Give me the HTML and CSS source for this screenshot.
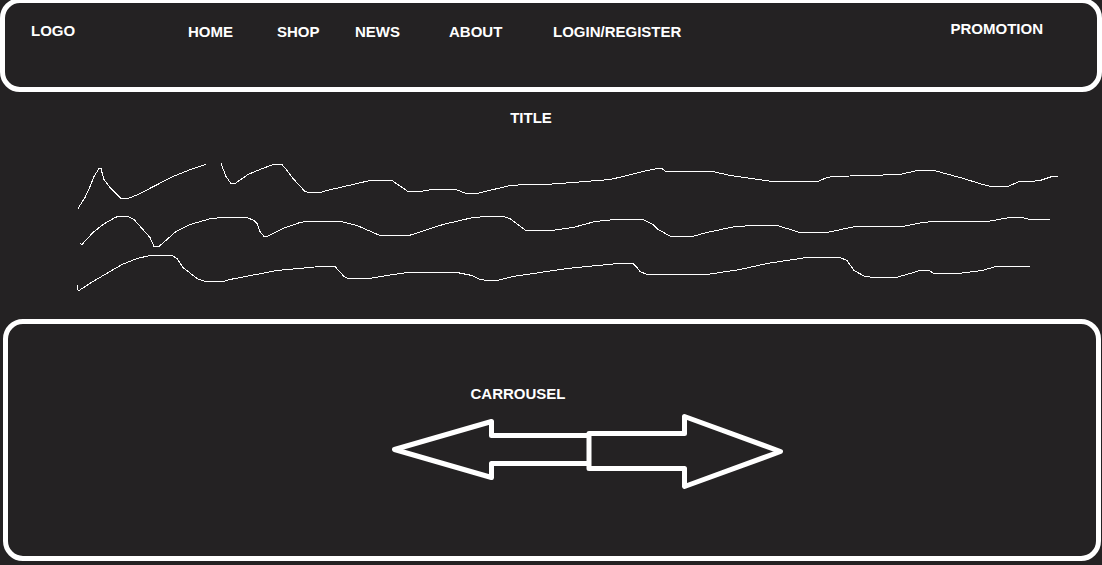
FILE: index.html
```html
<!DOCTYPE html>
<html lang="en">
<head>
<meta charset="utf-8">
<meta name="viewport" content="width=device-width, initial-scale=1">
<title>Wireframe</title>
<link rel="stylesheet" href="styles.css">
</head>
<body>
<header class="header">
  <a class="logo" href="#">LOGO</a>
  <nav class="nav">
    <a href="#">HOME</a>
    <a href="#">SHOP</a>
    <a href="#">NEWS</a>
    <a href="#">ABOUT</a>
    <a href="#">LOGIN/REGISTER</a>
  </nav>
  <a class="promotion" href="#">PROMOTION</a>
</header>
<main>
  <section>
    <h1 class="title">TITLE</h1>
    <svg class="scribble" viewBox="0 0 1102 150" aria-hidden="true">
      <g transform="translate(0 .5)">
        <polyline points="78,58 85,47 90,36 94,26 99,18 101,18 102,22 104,29 110,37 121,48 128,48 138,44 173,26 193,18 206,14"/>
        <polyline points="221,13 226,26 231,33 235,33 248,24 260,19 273,14 282,14 287,20 293,28 305,41 309,42 320,42 327,40 370,30 392,30 408,41 420,41 432,39 456,39 466,43 477,43 510,35 527,34 545,34 560,33 610,29 623,26 647,20 658,18 662,18 666,21 713,21 730,25 773,31 818,31 827,27 833,26 900,24 917,20 934,20 960,27 983,34 991,36 1008,36 1019,31 1030,31 1040,30 1052,26 1058,26"/>
        <polyline points="80,93 82,94 93,82 103,74 115,67 118,66 128,66 134,69 150,87 154,96 159,96 176,81 190,74 211,68 223,67 247,67 254,70 257,73 260,81 264,86 267,86 283,78 300,72 307,71 341,71 357,75 380,85 409,85 443,74 473,67 487,66 503,66 510,68 526,80 551,80 573,77 595,71 615,69 643,69 653,74 658,79 671,86 692,86 707,82 735,76 755,75 777,75 787,78 800,82 827,82 855,76 903,76 922,72 935,71 987,71 1010,67 1022,67 1030,69 1050,69"/>
        <polyline points="77,134 77,139 79,140 93,131 122,114 137,108 150,105 172,105 177,108 183,117 197,128 205,131 223,131 230,129 277,120 320,116 335,116 344,126 348,128 369,128 387,125 408,122 457,122 472,125 480,129 487,130 497,130 513,126 540,122 567,118 618,113 633,113 637,117 640,121 647,124 707,124 740,119 767,113 800,108 807,107 840,107 847,110 854,120 865,126 875,127 896,127 910,123 920,120 929,120 934,123 958,123 982,120 996,116 1030,116"/>
      </g>
    </svg>
  </section>
  <section class="carousel">
    <h2 class="carousel-title">CARROUSEL</h2>
    <div class="arrows">
      <button class="arrow" type="button" aria-label="Previous">
        <svg width="197" height="75" viewBox="0 0 197 75"><path d="M197 21.5H99.500V7.500L2.500 35.500L99.500 63.500V49.500H197"/></svg>
      </button>
      <button class="arrow" type="button" aria-label="Next">
        <svg width="195" height="75" viewBox="0 0 195 75"><path d="M0 19.500H95.500V2.500L191.500 37.500L95.500 72.500V54.500H0Z"/></svg>
      </button>
    </div>
  </section>
</main>
</body>
</html>
```
FILE: styles.css
```css
* {
  box-sizing: border-box;
}

body {
  margin: 0;
  background: #242223;
  color: #fff;
  font: bold 15px/18px "Liberation Sans", Arial, sans-serif;
}

a {
  color: inherit;
  text-decoration: none;
}

h1,
h2 {
  margin: 0;
  font-size: 15px;
  line-height: 18px;
  text-align: center;
}

.header {
  display: flex;
  align-items: flex-start;
  margin-top: -2px;
  min-height: 94px;
  padding: 17px 54px 0 26px;
  border: 5px solid #fff;
  border-radius: 20px;
}

.logo {
  width: 157px;
  padding-top: 2px;
}

.nav {
  display: grid;
  grid-template-columns: 89px 78px 94px 104px max-content;
  padding-top: 3px;
}

.promotion {
  margin-left: auto;
}

.title {
  margin-top: 17px;
  padding-right: 40px;
}

.scribble {
  display: block;
  width: 100%;
  margin-top: 23px;
  fill: none;
  stroke: #fff;
  stroke-width: 1;
  shape-rendering: crispEdges;
}

.carousel {
  margin: 19px 1px 4px 3px;
  padding: 61px 0 67px;
  border: 5px solid #fff;
  border-radius: 20px;
}

.carousel-title {
  padding-right: 68px;
}

.arrows {
  display: flex;
  justify-content: center;
  margin-top: 11px;
  padding-left: 72px;
}

.arrow {
  padding: 0;
  border: 0;
  background: none;
  cursor: pointer;
}

.arrow svg {
  display: block;
  overflow: visible;
  fill: none;
  stroke: #fff;
  stroke-width: 5;
  stroke-linejoin: round;
}
```
